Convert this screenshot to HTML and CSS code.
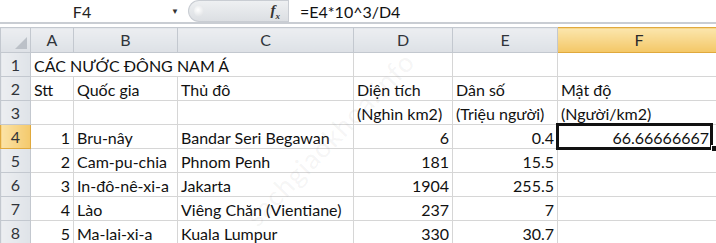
FILE: index.html
```html
<!DOCTYPE html>
<html lang="vi">
<head>
    <meta charset="UTF-8">
    <title>Các nước Đông Nam Á</title>
    <link rel="stylesheet" href="styles.css">
</head>
<body>

    <div class="formula-bar">
        <div class="name-box">
            <span class="cell-ref">F4</span>
            <span class="drop">&#9660;</span>
        </div>
        <div class="fx-box">
            <span class="knob"></span>
            <span class="fx">f<sub>x</sub></span>
        </div>
        <div class="formula">=E4*10^3/D4</div>
    </div>

    <div class="sheet">
        <table class="grid">
            <colgroup>
                <col class="c-head">
                <col class="c-a">
                <col class="c-b">
                <col class="c-c">
                <col class="c-d">
                <col class="c-e">
                <col class="c-f">
            </colgroup>
            <tr class="col-heads">
                <th class="corner"><span class="tri"></span></th>
                <th>A</th>
                <th>B</th>
                <th>C</th>
                <th>D</th>
                <th>E</th>
                <th class="on">F</th>
            </tr>
            <tr>
                <th class="row-head">1</th>
                <td colspan="3">CÁC NƯỚC ĐÔNG NAM Á</td>
                <td></td><td></td><td></td>
            </tr>
            <tr>
                <th class="row-head">2</th>
                <td>Stt</td>
                <td>Quốc gia</td>
                <td>Thủ đô</td>
                <td>Diện tích</td>
                <td>Dân số</td>
                <td>Mật độ</td>
            </tr>
            <tr>
                <th class="row-head">3</th>
                <td></td><td></td><td></td>
                <td>(Nghìn km2)</td>
                <td>(Triệu người)</td>
                <td>(Người/km2)</td>
            </tr>
            <tr>
                <th class="row-head on">4</th>
                <td class="num">1</td>
                <td>Bru-nây</td>
                <td>Bandar Seri Begawan</td>
                <td class="num">6</td>
                <td class="num">0.4</td>
                <td class="num active">66.66666667<span class="handle"></span></td>
            </tr>
            <tr>
                <th class="row-head">5</th>
                <td class="num">2</td>
                <td>Cam-pu-chia</td>
                <td>Phnom Penh</td>
                <td class="num">181</td>
                <td class="num">15.5</td>
                <td></td>
            </tr>
            <tr>
                <th class="row-head">6</th>
                <td class="num">3</td>
                <td>In-đô-nê-xi-a</td>
                <td>Jakarta</td>
                <td class="num">1904</td>
                <td class="num">255.5</td>
                <td></td>
            </tr>
            <tr>
                <th class="row-head">7</th>
                <td class="num">4</td>
                <td>Lào</td>
                <td>Viêng Chăn (Vientiane)</td>
                <td class="num">237</td>
                <td class="num">7</td>
                <td></td>
            </tr>
            <tr>
                <th class="row-head">8</th>
                <td class="num">5</td>
                <td>Ma-lai-xi-a</td>
                <td>Kuala Lumpur</td>
                <td class="num">330</td>
                <td class="num">30.7</td>
                <td></td>
            </tr>
        </table>

        <div class="watermark">sachgiaokhoa.info</div>
    </div>

</body>
</html>
```

FILE: styles.css
```css
body {
    margin: 0;
    padding: 0;
    width: 716px;
    height: 243px;
    overflow: hidden;
    background-color: #ffffff;
    font-family: Lato, "Open Sans", sans-serif;
    font-size: 16px;
    color: #111;
}

/* formula bar */

.formula-bar {
    display: flex;
    height: 22px;
    border-bottom: 2px solid #c9cdd3;
}

.name-box {
    width: 188px;
    display: flex;
    align-items: center;
}

.cell-ref {
    width: 164px;
    text-align: center;
    color: #222;
}

.drop {
    font-size: 8px;
    color: #333;
    margin-left: 7px;
}

.fx-box {
    width: 100px;
    display: flex;
    align-items: center;
    justify-content: space-between;
    background: linear-gradient(#eef0f2, #dcdfe3);
    border-radius: 11px 0 0 11px;
    border: 1px solid #c9cdd3;
    border-right: none;
    box-sizing: border-box;
    padding: 0 8px 0 5px;
}

.knob {
    width: 10px;
    height: 12px;
    border-radius: 50%;
    background: radial-gradient(circle at 40% 40%, #ffffff, #d6d9dd);
}

.fx {
    font-family: "Liberation Serif", serif;
    font-style: italic;
    font-weight: bold;
    font-size: 15px;
    color: #333;
}

.fx sub {
    font-size: 9px;
}

.formula {
    flex: 1;
    display: flex;
    align-items: center;
    padding-left: 11px;
    border-left: 1px solid #c9cdd3;
    color: #111;
}

/* sheet */

.sheet {
    position: relative;
    margin-top: 3px;
}

.grid {
    border-collapse: collapse;
    table-layout: fixed;
    width: 720px;
}

.c-head { width: 30px; }
.c-a { width: 43px; }
.c-b { width: 104px; }
.c-c { width: 176px; }
.c-d { width: 99px; }
.c-e { width: 105px; }
.c-f { width: 163px; }

.grid th,
.grid td {
    height: 22px;
    padding: 0 3px 1px 3px;
    border: 1px solid #d6d6d6;
    white-space: nowrap;
    overflow: visible;
    vertical-align: bottom;
    line-height: 19px;
}

.grid td {
    border-left: none;
}

.col-heads th {
    height: 23px;
    font-weight: normal;
    color: #30343a;
    vertical-align: middle;
    background: linear-gradient(#eceef1, #dde1e6);
    border: 1px solid #c3c8cf;
}

.col-heads th.on {
    background: linear-gradient(#fbe6ad, #f4c766);
    border-color: #e0a93d;
    color: #2a2a2a;
}

.corner {
    position: relative;
}

.tri {
    position: absolute;
    right: 3px;
    bottom: 3px;
    width: 0;
    height: 0;
    border-left: 12px solid transparent;
    border-bottom: 12px solid #bcc1c8;
}

.row-head {
    font-weight: normal;
    color: #30343a;
    text-align: center;
    vertical-align: middle !important;
    background: linear-gradient(90deg, #eceef1, #dfe3e8);
    border: 1px solid #c3c8cf !important;
}

.row-head.on {
    background: linear-gradient(90deg, #fbe3a6, #f4c96c);
    border-color: #e0a93d !important;
}

.num {
    text-align: right;
}

.active {
    position: relative;
    padding-right: 11px !important;
}

.active::after {
    content: "";
    position: absolute;
    left: -2px;
    top: -2px;
    width: 151px;
    height: 21px;
    border: 3px solid #111;
}

.handle {
    position: absolute;
    left: 153px;
    bottom: -4px;
    width: 5px;
    height: 5px;
    background-color: #111;
    border: 1px solid #fff;
    z-index: 2;
}

.watermark {
    position: absolute;
    left: 215px;
    top: 95px;
    font-size: 27px;
    letter-spacing: 1px;
    color: rgba(120, 120, 120, 0.08);
    transform: rotate(-46deg);
    pointer-events: none;
}
```
